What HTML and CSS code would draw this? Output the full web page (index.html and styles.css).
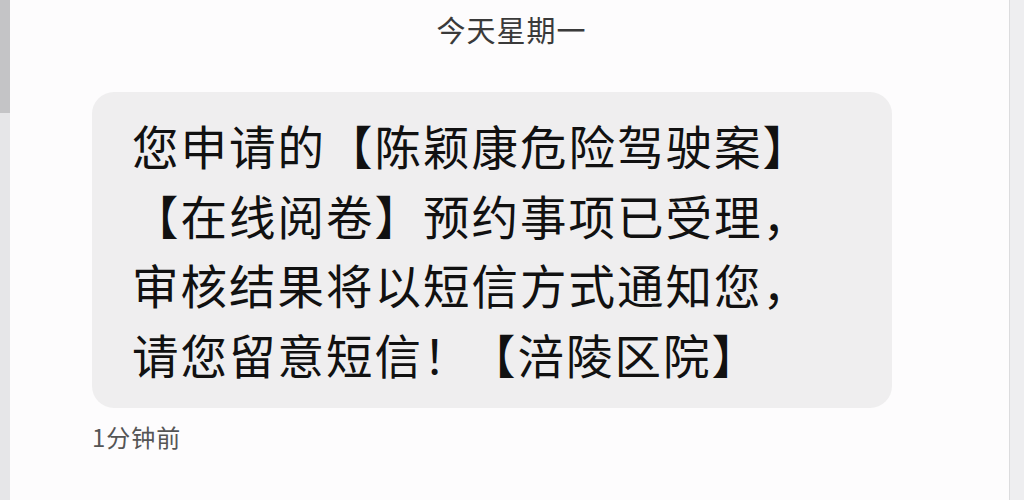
FILE: index.html
```html
<!DOCTYPE html>
<html lang="zh-CN">
<head>
<meta charset="utf-8">
<link rel="stylesheet" href="styles.css">
</head>
<body>
<div class="screen">
  <div class="edge-left"><div class="edge-thumb"></div></div>
  <main class="chat">
    <div class="day">今天星期一</div>
    <div class="bubble">您申请的【陈颖康危险驾驶案】<br>【在线阅卷】预约事项已受理，<br>审核结果将以短信方式通知您，<br>请您留意短信！ 【涪陵区院】</div>
    <div class="time">1分钟前</div>
  </main>
  <div class="edge-right"></div>
</div>
</body>
</html>
```
FILE: styles.css
```css
html, body {
  margin: 0;
  padding: 0;
  background: #fdfcfd;
}
.screen {
  display: flex;
  width: 1024px;
  height: 500px;
  overflow: hidden;
  font-family: "Noto Sans CJK SC", "Noto Sans", sans-serif;
}
.edge-left {
  width: 10px;
  flex: none;
  background: #e6e6e8;
  display: flex;
  flex-direction: column;
}
.edge-thumb {
  height: 113px;
  background: #c4c4c6;
}
.chat {
  flex: 1;
  display: flex;
  flex-direction: column;
  align-items: flex-start;
  padding-left: 82px;
}
.day {
  align-self: stretch;
  text-align: center;
  font-size: 29px;
  letter-spacing: 1px;
  line-height: 40px;
  padding-top: 9px;
  height: 80px;
  box-sizing: border-box;
  color: #3a3a3a;
  padding-right: 82px;
  padding-left: 4px;
}
.bubble {
  margin-top: 12px;
  width: 800px;
  height: 316px;
  box-sizing: border-box;
  background: #efeeef;
  border-radius: 22px;
  padding: 18px 0 0 40px;
  font-size: 46.5px;
  letter-spacing: 2px;
  word-spacing: -15px;
  line-height: 69.5px;
  color: #111;
  white-space: nowrap;
}
.time {
  margin-top: 14px;
  font-size: 24px;
  letter-spacing: 1px;
  line-height: 30px;
  color: #555;
}
.edge-right {
  width: 14px;
  flex: none;
  background: #eeeef0;
  border-left: 1px solid #dcdcde;
}
```
